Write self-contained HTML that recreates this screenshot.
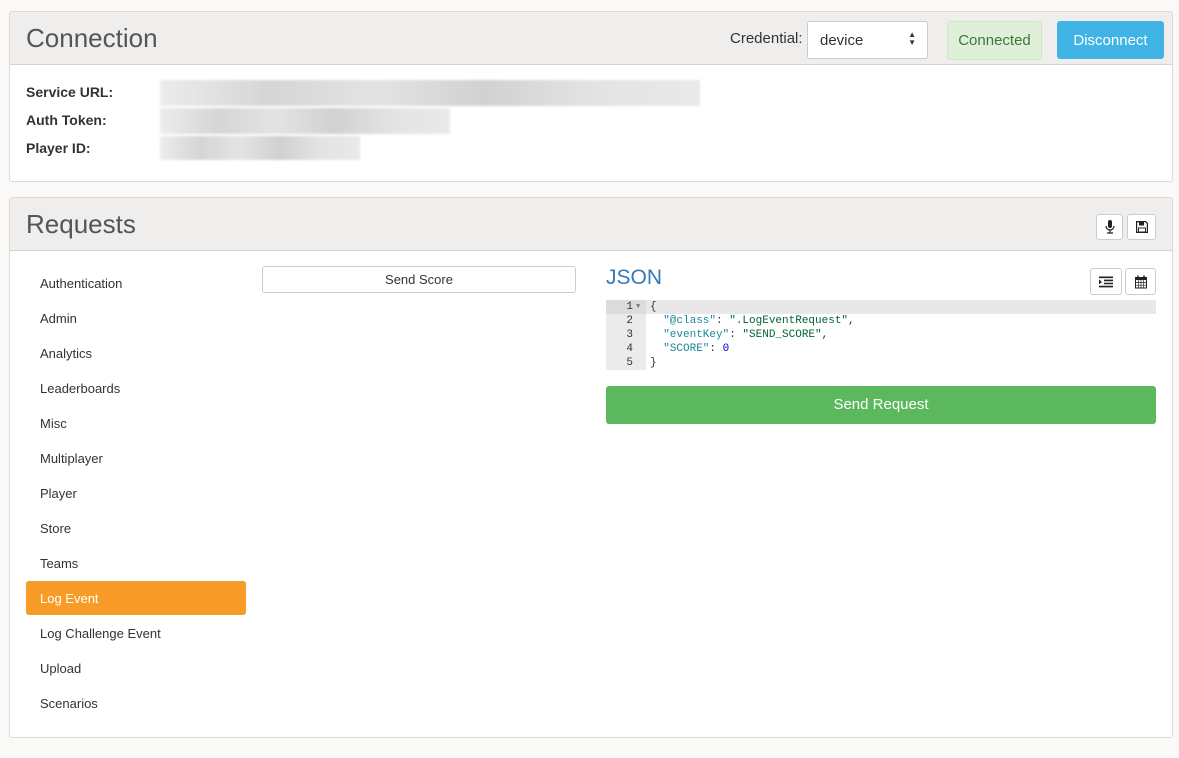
<!DOCTYPE html>
<html><head><style>
body{margin:0;background:#faf9f7;font-family:"Liberation Sans",sans-serif;color:#333;width:1179px;height:758px;overflow:hidden;position:relative}
.panel{position:absolute;left:9px;width:1162px;background:#fff;border:1px solid #dcdad6;border-radius:3px}
.hd{background:#efeeec;border-bottom:1px solid #d6d4d0;height:52px;position:relative}
.hd h1{margin:0;position:absolute;left:16px;top:11px;font-weight:normal;font-size:26px;color:#555}
.abs{position:absolute}
.lbl{font-weight:bold;font-size:14px;color:#333}
.blur{position:absolute;background:linear-gradient(90deg,#e8e8e8,#ccc 20%,#ddd 40%,#c6c6c6 60%,#ddd 80%,#e5e5e5);opacity:.8;filter:blur(1px)}
.menu div{position:absolute;left:26px;width:206px;height:34px;line-height:35px;padding-left:14px;font-size:13px;color:#333}
.btn{position:absolute;border:1px solid #ccc;border-radius:3px;background:#fff;box-sizing:border-box}
.btn svg{position:absolute;left:50%;top:50%;transform:translate(-50%,-50%)}
.code{font-family:"Liberation Mono",monospace;font-size:11px;line-height:14px}
</style></head><body>
<div class="panel" style="top:11px;height:169px">
 <div class="hd"><h1>Connection</h1>
  <div class="abs" style="left:720px;top:18px;font-size:15px;color:#333">Credential:</div>
  <div class="btn" style="left:797px;top:9px;width:121px;height:38px;font-size:15px;padding:10px 12px">device<span style="position:absolute;right:11px;top:9px;font-size:8px;line-height:8px">▲<br>▼</span></div>
  <div class="abs" style="left:937px;top:9px;width:93px;height:37px;background:#dff0d8;border:1px solid #d0e6c6;border-radius:3px;color:#3c763d;font-size:15px;text-align:center;line-height:37px">Connected</div>
  <div class="abs" style="left:1047px;top:9px;width:107px;height:38px;background:#41b4e6;border-radius:3px;color:#fff;font-size:15px;text-align:center;line-height:40px">Disconnect</div>
 </div>
 <div class="lbl abs" style="left:16px;top:72px">Service URL:</div>
 <div class="lbl abs" style="left:16px;top:100px">Auth Token:</div>
 <div class="lbl abs" style="left:16px;top:128px">Player ID:</div>
 <div class="blur" style="left:150px;top:68px;width:540px;height:26px"></div>
 <div class="blur" style="left:150px;top:96px;width:290px;height:26px"></div>
 <div class="blur" style="left:150px;top:124px;width:200px;height:24px"></div>
</div>
<div class="panel" style="top:197px;height:539px">
 <div class="hd"><h1>Requests</h1>
  <div class="btn" style="left:1086px;top:16px;width:27px;height:26px"><svg width="10" height="14" viewBox="0 0 10 14"><rect x="3" y="0" width="4" height="8" rx="2" fill="#222"/><path d="M1 6a4 4 0 0 0 8 0M5 10v3M2 13h6" stroke="#222" fill="none" stroke-width="1.2"/></svg></div>
  <div class="btn" style="left:1117px;top:16px;width:29px;height:26px"><svg width="12" height="12" viewBox="0 0 12 12"><path d="M0.6 0.6h9l1.8 1.8v9H0.6z" fill="none" stroke="#222" stroke-width="1.2"/><rect x="3" y="1" width="5" height="3.5" fill="#222"/><rect x="2.5" y="7" width="7" height="4" fill="none" stroke="#222"/></svg></div>
 </div>
</div>
<div class="menu">
<div style="top:266px">Authentication</div><div style="top:301px">Admin</div><div style="top:336px">Analytics</div><div style="top:371px">Leaderboards</div><div style="top:406px">Misc</div><div style="top:441px">Multiplayer</div><div style="top:476px">Player</div><div style="top:511px">Store</div><div style="top:546px">Teams</div>
<div style="top:581px;background:#f89c27;color:#fff;border-radius:3px">Log Event</div>
<div style="top:616px">Log Challenge Event</div><div style="top:651px">Upload</div><div style="top:686px">Scenarios</div>
</div>
<div class="btn" style="left:262px;top:266px;width:314px;height:27px;text-align:center;line-height:25px;font-size:13px">Send Score</div>
<div class="abs" style="left:606px;top:266px;font-size:21px;color:#337ab7">JSON</div>
<div class="btn" style="left:1090px;top:268px;width:32px;height:27px"><svg width="14" height="11" viewBox="0 0 14 11"><path d="M0 0h14v1.6H0zM5 3.1h9v1.6H5zM5 6.2h9v1.6H5zM0 9.3h14v1.6H0z" fill="#222"/><path d="M0 3l3 2.5L0 8z" fill="#222"/></svg></div>
<div class="btn" style="left:1125px;top:268px;width:31px;height:27px"><svg width="12" height="13" viewBox="0 0 12 13"><rect x="0.5" y="2" width="11" height="10.5" fill="none" stroke="#222"/><rect x="0.5" y="2" width="11" height="2.5" fill="#222"/><path d="M3 0v3M9 0v3" stroke="#222" stroke-width="1.5"/><path d="M0.5 7h11M0.5 9.7h11M3.3 4.5v8M6 4.5v8M8.7 4.5v8" stroke="#222" stroke-width=".7"/></svg></div>
<div class="abs code" style="left:606px;top:300px;width:550px">
 <div style="position:absolute;left:0;top:0;width:40px;height:70px;background:#ebebeb"></div>
 <div style="position:absolute;left:0;top:0;width:550px;height:14px;background:#e8e8e8"></div>
 <div style="position:absolute;left:0;top:0;width:40px;height:14px;background:#dcdcdc"></div>
 <div style="position:absolute;left:0;top:0;width:27px;text-align:right;color:#333">1<br>2<br>3<br>4<br>5</div>
 <div style="position:absolute;left:30px;top:0;font-size:7px;color:#777">▼</div>
 <div style="position:absolute;left:44px;top:0;white-space:pre;color:#333">{
  <span style="color:#1a8a9a">"@class"</span>: <span style="color:#063">".LogEventRequest"</span>,
  <span style="color:#1a8a9a">"eventKey"</span>: <span style="color:#063">"SEND_SCORE"</span>,
  <span style="color:#1a8a9a">"SCORE"</span>: <span style="color:#00c">0</span>
}</div>
</div>
<div class="abs" style="left:606px;top:386px;width:550px;height:38px;background:#5cb85c;border-radius:3px;color:#fff;font-size:15px;text-align:center;line-height:38px">Send Request</div>
</body></html>
